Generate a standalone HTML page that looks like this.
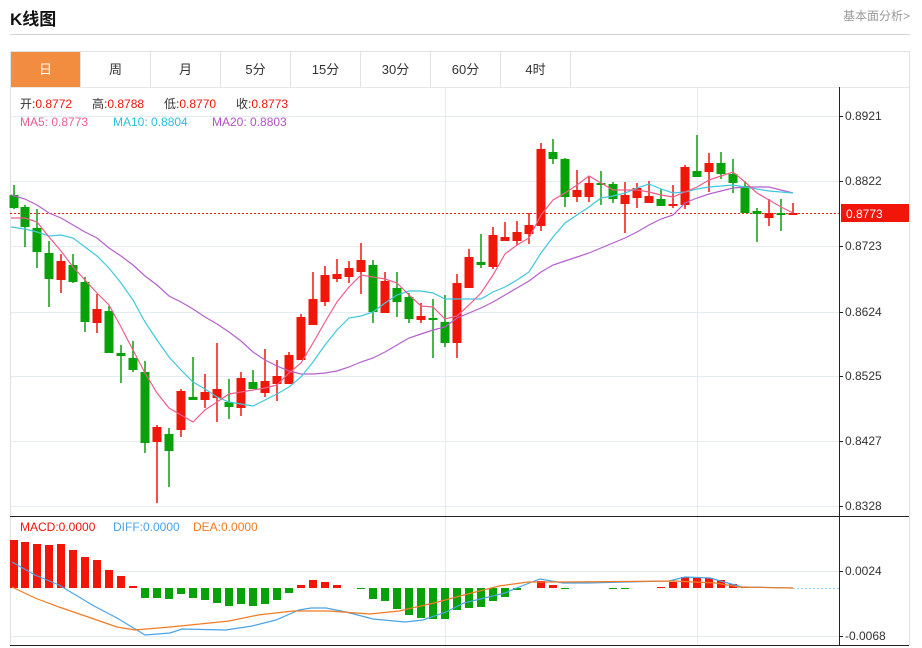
<!DOCTYPE html>
<html><head><meta charset="utf-8"><style>
body{margin:0;width:922px;height:648px;background:#fff;font-family:"Liberation Sans","Noto Sans CJK SC",sans-serif;overflow:hidden;position:relative}
.t{position:absolute;left:10px;top:5px;font-size:17px;font-weight:bold;color:#111}
.m{position:absolute;right:12px;top:7px;font-size:12px;color:#999}
.hl{position:absolute;left:10px;top:34px;width:900px;height:1px;background:#d5d5d5}
.tabs{position:absolute;left:10px;top:51px;width:898px;height:35px;border:1px solid #e2e2e2;border-bottom:1px solid #e8e8e8}
.tab{position:absolute;top:0;height:35px;width:69px;border-right:1px solid #e2e2e2;text-align:center;line-height:35px;font-size:13px;color:#333}
.tab.a{background:#f28c3e;color:#fff}
svg{position:absolute;left:0;top:0}
</style></head><body>
<div class="t">K线图</div><div class="m">基本面分析&gt;</div><div class="hl"></div>
<div class="tabs">
<div class="tab a" style="left:0">日</div><div class="tab" style="left:70px">周</div><div class="tab" style="left:140px">月</div><div class="tab" style="left:210px">5分</div><div class="tab" style="left:280px">15分</div><div class="tab" style="left:350px">30分</div><div class="tab" style="left:420px">60分</div><div class="tab" style="left:490px">4时</div>
</div>
<svg width="922" height="648" viewBox="0 0 922 648" font-family="Liberation Sans, Noto Sans CJK SC, sans-serif">
<g stroke="#e3ecf3" stroke-width="1">
<path d="M10 116.5H839M10 181.5H839M10 246.5H839M10 312.5H839M10 376.5H839M10 441.5H839M10 506.5H839M10 571.5H839M10 636.5H839M445.5 87V646M697.5 87V646"/>
</g>
<path d="M10.5 87V646M909.5 87V646" stroke="#e2e2e2"/>
<path d="M839.5 87V646" stroke="#222"/>
<path d="M10 516.5H909M10 645.5H909" stroke="#222"/>
<path d="M839 116.5h4M839 181.5h4M839 246.5h4M839 312.5h4M839 376.5h4M839 441.5h4M839 506.5h4M839 571.5h4M839 636.5h4" stroke="#222"/>
<g font-size="12" fill="#333">
<text x="845" y="120">0.8921</text><text x="845" y="185">0.8822</text><text x="845" y="250">0.8723</text><text x="845" y="316">0.8624</text><text x="845" y="380">0.8525</text><text x="845" y="445">0.8427</text><text x="845" y="510">0.8328</text><text x="845" y="575">0.0024</text><text x="845" y="640">-0.0068</text>
</g>
<path d="M10 213.5H839" stroke="#f01c0c" stroke-dasharray="2,2"/>
<rect x="841" y="204" width="68" height="18" fill="#f2150a"/>
<text x="846" y="218" font-size="12" fill="#fff">0.8773</text>
<path stroke="#09a10a" stroke-width="1.5" fill="none" d="M14 185V209M25 205V247M37 209V268M49 241V307M73 254V283M85 277V332M109 306V353M121 345V383M133 341V372M145 361V453M169 428V487M193 357V400M229 379V419M253 370V389M373 260V323M397 272V317M409 293V323M433 299V358M445 295V347M481 234V268M553 139V164M565 158V207M601 171V205M613 182V203M661 189V206M697 135V177M721 152V179M733 159V193M745 181V213M757 208V242M781 199V231"/>
<path stroke="#f2150a" stroke-width="1.5" fill="none" d="M61 254V293M97 294V333M157 425V503M181 389V437M205 374V408M217 343V422M241 372V416M265 349V397M277 360V401M289 352V384M301 314V360M313 272V325M325 266V306M337 259V282M349 261V283M361 243V294M385 272V313M421 303V323M457 274V358M469 249V288M493 227V269M505 222V241M517 221V245M529 213V244M541 143V231M577 170V202M589 176V202M625 182V233M637 183V208M649 181V203M673 185V208M685 165V209M709 153V192M769 199V226M793 203V215"/>
<g fill="#09a10a">
<rect x="9.5" y="195" width="9" height="13"/><rect x="20.5" y="207" width="9" height="20"/><rect x="32.5" y="228" width="9" height="24"/><rect x="44.5" y="253" width="9" height="26"/><rect x="68.5" y="265" width="9" height="17"/><rect x="80.5" y="282" width="9" height="40"/><rect x="104.5" y="311" width="9" height="42"/><rect x="116.5" y="353" width="9" height="3"/><rect x="128.5" y="358" width="9" height="12"/><rect x="140.5" y="372" width="9" height="71"/><rect x="164.5" y="434" width="9" height="17"/><rect x="188.5" y="397" width="9" height="3"/><rect x="224.5" y="402" width="9" height="5"/><rect x="248.5" y="382" width="9" height="7"/><rect x="368.5" y="265" width="9" height="47"/><rect x="392.5" y="288" width="9" height="14"/><rect x="404.5" y="297" width="9" height="22"/><rect x="428.5" y="318" width="9" height="2"/><rect x="440.5" y="322" width="9" height="21"/><rect x="476.5" y="262" width="9" height="3"/><rect x="548.5" y="152" width="9" height="7"/><rect x="560.5" y="159" width="9" height="38"/><rect x="596.5" y="183" width="9" height="2"/><rect x="608.5" y="184" width="9" height="15"/><rect x="656.5" y="199" width="9" height="7"/><rect x="692.5" y="171" width="9" height="6"/><rect x="716.5" y="163" width="9" height="11"/><rect x="728.5" y="174" width="9" height="9"/><rect x="740.5" y="186" width="9" height="27"/><rect x="752.5" y="211" width="9" height="3"/><rect x="776.5" y="213" width="9" height="2"/>
</g>
<g fill="#f2150a">
<rect x="56.5" y="261" width="9" height="19"/><rect x="92.5" y="309" width="9" height="14"/><rect x="152.5" y="427" width="9" height="15"/><rect x="176.5" y="391" width="9" height="39"/><rect x="200.5" y="392" width="9" height="8"/><rect x="212.5" y="389" width="9" height="9"/><rect x="236.5" y="378" width="9" height="30"/><rect x="260.5" y="381" width="9" height="12"/><rect x="272.5" y="376" width="9" height="8"/><rect x="284.5" y="355" width="9" height="29"/><rect x="296.5" y="317" width="9" height="43"/><rect x="308.5" y="299" width="9" height="26"/><rect x="320.5" y="275" width="9" height="27"/><rect x="332.5" y="274" width="9" height="5"/><rect x="344.5" y="268" width="9" height="9"/><rect x="356.5" y="260" width="9" height="12"/><rect x="380.5" y="281" width="9" height="32"/><rect x="416.5" y="316" width="9" height="4"/><rect x="452.5" y="283" width="9" height="60"/><rect x="464.5" y="257" width="9" height="31"/><rect x="488.5" y="235" width="9" height="32"/><rect x="500.5" y="237" width="9" height="4"/><rect x="512.5" y="232" width="9" height="9"/><rect x="524.5" y="225" width="9" height="9"/><rect x="536.5" y="149" width="9" height="77"/><rect x="572.5" y="190" width="9" height="7"/><rect x="584.5" y="183" width="9" height="14"/><rect x="620.5" y="195" width="9" height="9"/><rect x="632.5" y="188" width="9" height="10"/><rect x="644.5" y="196" width="9" height="7"/><rect x="668.5" y="204" width="9" height="2"/><rect x="680.5" y="167" width="9" height="38"/><rect x="704.5" y="163" width="9" height="9"/><rect x="764.5" y="213" width="9" height="5"/><rect x="788.5" y="213" width="9" height="2"/>
</g>
<g fill="none" stroke-width="1.2">
<polyline stroke="#b65fcf" points="11,195 25,199 37,205 49,213 61,218 73,225 85,232 97,238 109,248 121,256 133,265 145,276 157,285 169,296 181,302 193,309 205,317 217,324 229,332 241,341 253,352 265,360 277,366 289,371 301,374 313,374 325,373 337,371 349,367 361,362 373,358 385,352 397,345 409,338 421,334 433,330 445,327 457,318 469,313 481,308 493,302 505,295 517,288 529,281 541,272 553,265 565,261 577,257 589,253 601,248 613,243 625,238 637,232 649,225 661,219 673,215 685,203 697,198 709,194 721,191 733,188 745,187 757,187 769,187 781,190 793,193"/>
<polyline stroke="#3fc8dc" points="11,227 25,229 37,232 49,236 61,235 73,238 85,247 97,256 109,268 121,283 133,300 145,322 157,340 169,357 181,370 193,382 205,389 217,397 229,402 241,404 253,406 265,400 277,394 289,387 301,377 313,362 325,345 337,330 349,318 361,316 373,312 385,303 397,295 409,291 421,291 433,293 445,299 457,299 469,299 481,299 493,292 505,287 517,280 529,272 541,253 553,237 565,223 577,215 589,207 601,198 613,196 625,193 637,188 649,184 661,189 673,193 685,192 697,189 709,187 721,186 733,185 745,187 757,189 769,191 781,192 793,193"/>
<polyline stroke="#ee5d8a" points="11,218 25,218 37,222 49,237 61,251 73,267 85,280 97,293 109,305 121,327 133,350 145,373 157,393 169,408 181,415 193,422 205,410 217,402 229,394 241,392 253,390 265,388 277,385 289,373 301,363 313,343 325,322 337,302 349,287 361,275 373,277 385,279 397,283 409,295 421,306 433,307 445,319 457,316 469,305 481,293 493,275 505,254 517,245 529,238 541,215 553,200 565,193 577,185 589,176 601,183 613,190 625,190 637,190 649,192 661,195 673,197 685,192 697,187 709,180 721,176 733,172 745,182 757,193 769,200 781,207 793,213"/>
</g>
<g fill="#f2150a">
<rect x="10" y="540" width="8" height="48"/><rect x="21" y="542" width="8" height="46"/><rect x="33" y="544" width="8" height="44"/><rect x="45" y="545" width="8" height="43"/><rect x="57" y="544" width="8" height="44"/><rect x="69" y="550" width="8" height="38"/><rect x="81" y="557" width="8" height="31"/><rect x="93" y="560" width="8" height="28"/><rect x="105" y="570" width="8" height="18"/><rect x="117" y="576" width="8" height="12"/><rect x="129" y="586" width="8" height="2"/>
<rect x="297" y="585" width="8" height="3"/><rect x="309" y="580" width="8" height="8"/><rect x="321" y="582" width="8" height="6"/><rect x="333" y="585" width="8" height="3"/>
<rect x="537" y="581" width="8" height="7"/><rect x="549" y="585" width="8" height="3"/>
<rect x="657" y="587" width="8" height="1"/><rect x="669" y="582" width="8" height="6"/><rect x="681" y="577" width="8" height="11"/><rect x="693" y="577" width="8" height="11"/><rect x="705" y="578" width="8" height="10"/><rect x="717" y="580" width="8" height="8"/><rect x="729" y="584" width="8" height="4"/><rect x="741" y="587" width="8" height="1"/>
</g>
<g fill="#09a10a">
<rect x="141" y="588" width="8" height="10"/><rect x="153" y="588" width="8" height="10"/><rect x="165" y="588" width="8" height="11"/><rect x="177" y="588" width="8" height="6"/><rect x="189" y="588" width="8" height="10"/><rect x="201" y="588" width="8" height="12"/><rect x="213" y="588" width="8" height="15"/><rect x="225" y="588" width="8" height="18"/><rect x="237" y="588" width="8" height="16"/><rect x="249" y="588" width="8" height="18"/><rect x="261" y="588" width="8" height="16"/><rect x="273" y="588" width="8" height="12"/><rect x="285" y="588" width="8" height="5"/>
<rect x="357" y="588" width="8" height="1"/><rect x="369" y="588" width="8" height="11"/><rect x="381" y="588" width="8" height="13"/><rect x="393" y="588" width="8" height="21"/><rect x="405" y="588" width="8" height="27"/><rect x="417" y="588" width="8" height="30"/><rect x="429" y="588" width="8" height="31"/><rect x="441" y="588" width="8" height="31"/><rect x="453" y="588" width="8" height="22"/><rect x="465" y="588" width="8" height="20"/><rect x="477" y="588" width="8" height="19"/><rect x="489" y="588" width="8" height="13"/><rect x="501" y="588" width="8" height="9"/><rect x="513" y="588" width="8" height="2"/>
<rect x="561" y="588" width="8" height="1"/><rect x="609" y="588" width="8" height="1"/><rect x="621" y="588" width="8" height="1"/>
</g>
<path d="M793 588.5H839" stroke="#8fd3ee" stroke-dasharray="2,2"/>
<g fill="none" stroke-width="1.2">
<polyline stroke="#4aa3e8" points="12,562 35,575 59,585 94,606 117,618 145,635 170,633 182,629 226,630 252,626 276,620 299,610 311,608 326,608 346,612 373,619 405,622 423,620 446,612 464,603 505,593 519,587 540,579 563,583 587,583 669,581 685,577 710,578 742,587 793,588"/>
<polyline stroke="#f07b22" points="12,587 35,598 59,607 94,619 117,627 135,630 170,627 200,624 229,621 258,615 293,611 329,611 370,614 399,611 434,603 464,595 499,586 528,582 563,582 675,581 716,583 739,587 793,588"/>
</g>
<g font-size="12">
<text x="20" y="108" fill="#333">开:<tspan fill="#f2150a">0.8772</tspan></text>
<text x="92" y="108" fill="#333">高:<tspan fill="#f2150a">0.8788</tspan></text>
<text x="164" y="108" fill="#333">低:<tspan fill="#f2150a">0.8770</tspan></text>
<text x="236" y="108" fill="#333">收:<tspan fill="#f2150a">0.8773</tspan></text>
<text x="20" y="126" fill="#ee5d8a">MA5: 0.8773</text>
<text x="113" y="126" fill="#2bbfd8">MA10: 0.8804</text>
<text x="212" y="126" fill="#b051c6">MA20: 0.8803</text>
<text x="20" y="531" fill="#f2150a">MACD:0.0000</text>
<text x="113" y="531" fill="#4aa3e8">DIFF:0.0000</text>
<text x="193" y="531" fill="#f07b22">DEA:0.0000</text>
</g>
</svg>
</body></html>
